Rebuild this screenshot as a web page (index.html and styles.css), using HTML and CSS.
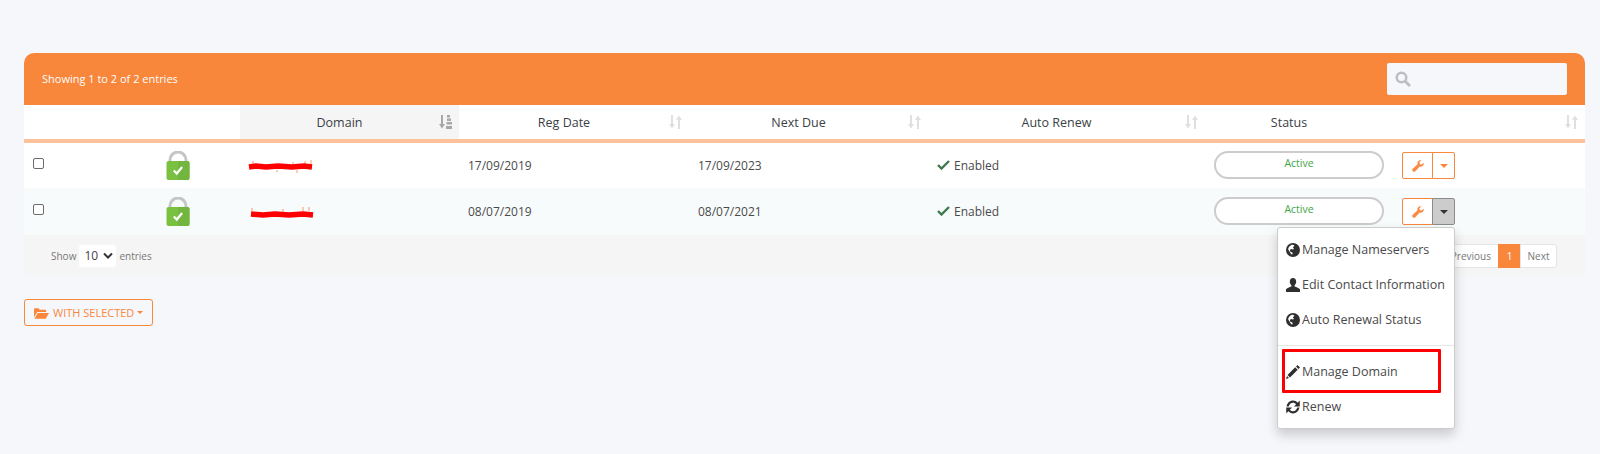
FILE: index.html
```html
<!DOCTYPE html>
<html lang="en">
<head>
  <meta charset="UTF-8">
  <title>My Domains</title>
  <link rel="stylesheet" href="styles.css">
</head>
<body>
  <svg class="defs" width="0" height="0">
    <symbol id="sort" viewBox="0 0 13 14">
      <path d="M2 0h2v9h2l-3 4.500L0 9h2z M9 5H7l3-4.500L13 5h-2v9H9z"/>
    </symbol>
    <symbol id="globe" viewBox="0 0 14 14">
      <path fill-rule="evenodd" d="M7 0a7 7 0 1 0 0 14A7 7 0 0 0 7 0zM5 2.200c1.200-.7 2.500-.5 3.200.2.300.8-.5 1.200-1.300 1.500-.2.800.8 1 1 1.900-.3 1-1.700.8-2.500.3-.9.100-1.500.8-1.400 1.800.2 1 1.300 1.200 2.200 1.400.5.500.3 1.500 0 2.400-1-.5-1.800-1.700-2.400-2.800C3.300 7.700 2.200 7.200 2.200 6 2.500 4.300 3.600 3 5 2.200z"/>
    </symbol>
    <symbol id="user" viewBox="0 0 14 14">
      <path d="M7 0c2 0 3.200 1.500 3.200 3.600 0 1.600-.7 3-1.600 3.700v1.100c1.900.6 4.400 1.500 5.400 2.800V14H0v-2.800c1-1.300 3.500-2.200 5.400-2.800V7.300c-.9-.7-1.600-2.100-1.600-3.700C3.800 1.500 5 0 7 0z"/>
    </symbol>
    <symbol id="wrench" viewBox="0 0 14 14">
      <path d="M13.500 3.200c.5 1.500 0 3-1.200 3.900-1 .7-2.200.8-3.200.4L3.600 13.400c-.6.600-1.600.6-2.200 0l-.8-.8c-.6-.6-.6-1.500 0-2.100l5.900-5.600c-.4-1.100-.2-2.300.5-3.200C7.900.5 9.400 0 10.800.500L8.700 2.700l.4 2.100 2.200.5z"/>
    </symbol>
    <symbol id="lock" viewBox="0 0 24 29">
      <path d="M4 11V9a8 8 0 0 1 16 0v2" fill="none" stroke="#c4c6c6" stroke-width="3"/>
      <rect x="0.500" y="10" width="23" height="19" rx="2" fill="#7ac142"/>
      <path d="M12 10h9.500a2 2 0 0 1 2 2v15a2 2 0 0 1-2 2H12z" fill="#72b53f"/>
      <path d="M7.800 19.500l3 3 5.300-6.500" fill="none" stroke="#fff" stroke-width="2.200"/>
    </symbol>
  </svg>

  <main class="page">
    <section class="card">
      <div class="card-top">
        <span class="info">Showing 1 to 2 of 2 entries</span>
        <label class="search">
          <svg class="search-icon" viewBox="0 0 16 16"><circle cx="6.500" cy="6.500" r="4.800" fill="none" stroke="currentColor" stroke-width="2.500"/><path d="M10 10l5 5" stroke="currentColor" stroke-width="3"/></svg>
        </label>
      </div>

      <table class="domains">
        <colgroup>
          <col class="c-check"><col class="c-lock"><col class="c-domain"><col class="c-reg"><col class="c-due"><col class="c-renew"><col class="c-status"><col class="c-actions">
        </colgroup>
        <thead>
          <tr>
            <th></th>
            <th></th>
            <th class="sorted"><div class="th-in"><span>Domain</span>
              <svg class="sort-icon" viewBox="0 0 13 14"><path d="M2 0h2v9h2l-3 4.500L0 9h2z"/><path d="M8 0h3v2.500H8zM8 3.500h4V6H8zM7.500 7H13v2.500H7.500zM7 11h6v3H7z"/></svg></div></th>
            <th><div class="th-in"><span>Reg Date</span><svg class="sort-icon"><use href="#sort"/></svg></div></th>
            <th><div class="th-in"><span>Next Due</span><svg class="sort-icon"><use href="#sort"/></svg></div></th>
            <th><div class="th-in"><span>Auto Renew</span><svg class="sort-icon"><use href="#sort"/></svg></div></th>
            <th><div class="th-in"><span>Status</span><i class="sort-gap"></i></div></th>
            <th><div class="th-in"><span></span><svg class="sort-icon"><use href="#sort"/></svg></div></th>
          </tr>
        </thead>
        <tbody>
          <tr>
            <td><input class="tick" type="checkbox"></td>
            <td class="lock-cell"><svg class="lock"><use href="#lock"/></svg></td>
            <td><svg class="scrawl" viewBox="0 0 68 14"><path d="M6 5V2M46 6V3M58 5V2M64 5V1M30 11l0 2M50 11l0 3" fill="none" stroke="#fb9a5c" stroke-width="1"/><path d="M2 8l7-1 10 1 12-1 14 1 12-1 8 1" fill="none" stroke="#f00" stroke-width="5.500"/></svg></td>
            <td>17/09/2019</td>
            <td>17/09/2023</td>
            <td><svg class="check" viewBox="0 0 13 10"><path d="M1 5l3.500 3.500L12 1" fill="none" stroke="#3d7a4d" stroke-width="2.400"/></svg>Enabled</td>
            <td><span class="pill">Active</span></td>
            <td>
              <div class="btn-group">
                <button class="btn-tool"><svg class="wrench"><use href="#wrench"/></svg></button>
                <button class="btn-caret"><i class="caret"></i></button>
              </div>
            </td>
          </tr>
          <tr>
            <td><input class="tick" type="checkbox"></td>
            <td class="lock-cell"><svg class="lock"><use href="#lock"/></svg></td>
            <td><svg class="scrawl scrawl-low" viewBox="0 0 68 14"><path d="M5 5V2M36 6V3M56 5V1M62 5V1" fill="none" stroke="#fb9a5c" stroke-width="1"/><path d="M4 8l12 1 12-1 14 1 14-1 10 1" fill="none" stroke="#f00" stroke-width="5.500"/></svg></td>
            <td>08/07/2019</td>
            <td>08/07/2021</td>
            <td><svg class="check" viewBox="0 0 13 10"><path d="M1 5l3.500 3.500L12 1" fill="none" stroke="#3d7a4d" stroke-width="2.400"/></svg>Enabled</td>
            <td><span class="pill">Active</span></td>
            <td>
              <div class="btn-group open">
                <button class="btn-tool"><svg class="wrench"><use href="#wrench"/></svg></button>
                <button class="btn-caret"><i class="caret"></i></button>
                <ul class="menu">
                  <li><svg class="menu-icon"><use href="#globe"/></svg>Manage Nameservers</li>
                  <li><svg class="menu-icon"><use href="#user"/></svg>Edit Contact Information</li>
                  <li><svg class="menu-icon"><use href="#globe"/></svg>Auto Renewal Status</li>
                  <li class="divider"></li>
                  <li><svg class="menu-icon" viewBox="0 0 14 14"><path d="M11.500 0L14 2.500 12.500 4 10 1.500zM9.200 2.300l2.500 2.500L4 12.500 1.500 10zM1 11l2 2-3 1z"/></svg>Manage Domain</li>
                  <li><svg class="menu-icon" viewBox="1 1 12 12"><path d="M1.500 6.500C2 3.500 4.300 1.500 7 1.500c1.700 0 3 .7 4 1.800L12.800 1.500V6.500H7.800l1.900-1.900C9 3.800 8.100 3.300 7 3.300c-1.800 0-3.200 1.400-3.600 3.200zM12.500 7.500C12 10.500 9.700 12.500 7 12.500c-1.700 0-3-.7-4-1.800L1.200 12.500V7.500h5l-1.900 1.900c.7.800 1.600 1.300 2.700 1.300 1.800 0 3.200-1.400 3.600-3.200z"/></svg>Renew</li>
                  <li class="highlight"></li>
                </ul>
              </div>
            </td>
          </tr>
        </tbody>
      </table>

      <div class="card-foot">
        <div class="length">
          Show
          <span class="select">10<svg viewBox="0 0 10 7"><path d="M1 1.500l4 4 4-4" fill="none" stroke="#333" stroke-width="2"/></svg></span>
          entries
        </div>
        <nav class="pager">
          <a>Previous</a><a class="current">1</a><a>Next</a>
        </nav>
      </div>
    </section>

    <button class="with-selected">
      <svg viewBox="0 0 16 12"><path d="M0 2a1 1 0 0 1 1-1h4l1 1.500h6a1 1 0 0 1 1 1V5H3.500L0 10.500zM4 6h12l-3.500 6H.500z"/></svg>
      With Selected<i class="caret"></i>
    </button>
  </main>
</body>
</html>
```

FILE: styles.css
```css
/* Reset */
* { box-sizing: border-box; margin: 0; padding: 0; }
html, body { min-height: 100vh; }
body { font-family: "Open Sans", sans-serif; font-size: 12px; color: #4a4a4a; background: #f5f7fb; }
.defs { position: absolute; }

.page { min-height: 100vh; padding: 53px 15px 0 24px; }

/* Card */
.card-top {
  display: flex;
  align-items: center;
  justify-content: space-between;
  height: 52px;
  padding: 0 18px;
  background: #f8863b;
  border-radius: 10px 10px 0 0;
}
.info { font-size: 11px; color: #fff; margin-top: -2px; }
.search {
  display: flex;
  align-items: center;
  width: 180px;
  height: 32px;
  padding-left: 8px;
  background: #f5f7fb;
  border-radius: 2px;
}
.search-icon { width: 16px; height: 16px; color: #bcbec4; }

/* Table */
.domains { width: 100%; border-collapse: collapse; table-layout: fixed; background: #fff; }
.c-check { width: 92px; }
.c-lock { width: 124px; }
.c-domain { width: 219px; }
.c-reg { width: 230px; }
.c-due { width: 239px; }
.c-renew { width: 277px; }
.c-status { width: 188px; }
.c-actions { width: 192px; }

th {
  height: 36px;
  font-size: 12.500px;
  font-weight: 400;
  color: #3a3f45;
  background: #fff;
  border-bottom: 4px solid #ffc19a;
}
th.sorted { background: #f5f5f5; }
.th-in { display: flex; align-items: center; padding-right: 7px; }
.th-in span { flex: 1; text-align: center; }
.sort-icon { width: 13px; height: 14px; fill: #e0e0e0; }
.sorted .sort-icon { fill: #a8a8a8; }
.sort-gap { width: 13px; }

td { height: 47px; padding: 0 9px; color: #4a4a4a; }
tbody tr:nth-child(2) td { background: #f8fbfc; }
.tick { display: block; width: 11px; height: 11px; margin-top: -4px; appearance: none; background: #fff; border: 1px solid #6b6b6b; border-radius: 2px; }
.lock-cell { text-align: center; }
.lock { display: block; width: 24px; height: 29px; margin: 0 auto; }
.scrawl { display: block; width: 68px; height: 14px; margin: 0 0 0 -2px; }
.scrawl-low { margin-top: 3px; }
.check { width: 13px; height: 10px; margin-right: 4px; }

.pill {
  display: block;
  width: 170px;
  height: 28px;
  margin-bottom: 1px;
  font-size: 10.500px;
  font-weight: 500;
  line-height: 21px;
  text-align: center;
  color: #3fa648;
  background: #fff;
  border: 2px solid #ccc;
  border-radius: 14px;
}

/* Action buttons */
.btn-group { position: relative; display: flex; width: 53px; height: 27px; }
.btn-group button { display: flex; align-items: center; justify-content: center; background: #fff; border: 1px solid #f9873c; }
.btn-tool { width: 31px; border-radius: 2px 0 0 2px; }
.btn-caret { width: 23px; margin-left: -1px; border-radius: 0 2px 2px 0; }
.wrench { width: 12px; height: 12px; fill: #fa8a45; }
.caret { display: inline-block; width: 0; height: 0; border: 4px solid transparent; border-top-color: #f9873c; border-bottom: 0; vertical-align: middle; }
.open .btn-caret { background: #ccc; border-color: #8c8c8c; }
.open .btn-caret .caret { border-top-color: #333; }

/* Dropdown */
.menu {
  position: absolute;
  top: 29px;
  right: 0;
  z-index: 5;
  width: 178px;
  padding: 4px 0;
  list-style: none;
  background: #fff;
  border: 1px solid #ccc;
  border-radius: 3px;
  box-shadow: 0 6px 12px rgba(0,0,0,0.18);
}
.menu li { display: flex; align-items: center; height: 35px; padding-left: 8px; font-size: 12.500px; color: #4a4a4a; white-space: nowrap; }
.menu li.divider { height: 1px; margin: 8px 0; padding: 0; background: #e5e5e5; }
.menu-icon { width: 14px; height: 14px; margin-right: 2px; fill: #2f2f2f; }
.menu li.highlight { position: absolute; top: 121px; left: 4px; width: 159px; height: 44px; padding: 0; border: 3px solid #f00; border-radius: 1px; }

/* Footer */
.card-foot {
  display: flex;
  align-items: center;
  justify-content: space-between;
  height: 41px;
  padding: 0 28px 0 27px;
  background: #f5f5f5;
}
.length { display: flex; align-items: center; gap: 3px; font-size: 10px; color: #777; }
.select { display: flex; align-items: center; justify-content: space-between; width: 37px; height: 22px; padding: 0 3px 0 5px; font-size: 12px; color: #444; background: #fff; border-radius: 3px; }
.select svg { width: 10px; height: 7px; }
.pager { display: flex; height: 24px; font-size: 10px; color: #777; }
.pager a { display: flex; align-items: center; justify-content: center; padding: 0 7px; background: #fff; border: 1px solid #e5e5e5; }
.pager a + a { margin-left: -1px; }
.pager a:first-child { border-radius: 3px 0 0 3px; }
.pager a:last-child { width: 37px; border-radius: 0 3px 3px 0; }
.pager .current { width: 23px; color: #fff; background: #f8863b; border-color: #f8863b; }

/* With selected */
.with-selected {
  display: flex;
  align-items: center;
  gap: 4px;
  width: 129px;
  height: 27px;
  margin-top: 23px;
  padding-left: 9px;
  font-family: inherit;
  font-size: 11px;
  text-transform: uppercase;
  color: #f9873c;
  background: transparent;
  border: 1px solid #f9873c;
  border-radius: 3px;
}
.with-selected svg { width: 15px; height: 12px; fill: #f9873c; }
.with-selected .caret { margin-left: -1px; border-width: 3.500px; border-bottom: 0; }
```
